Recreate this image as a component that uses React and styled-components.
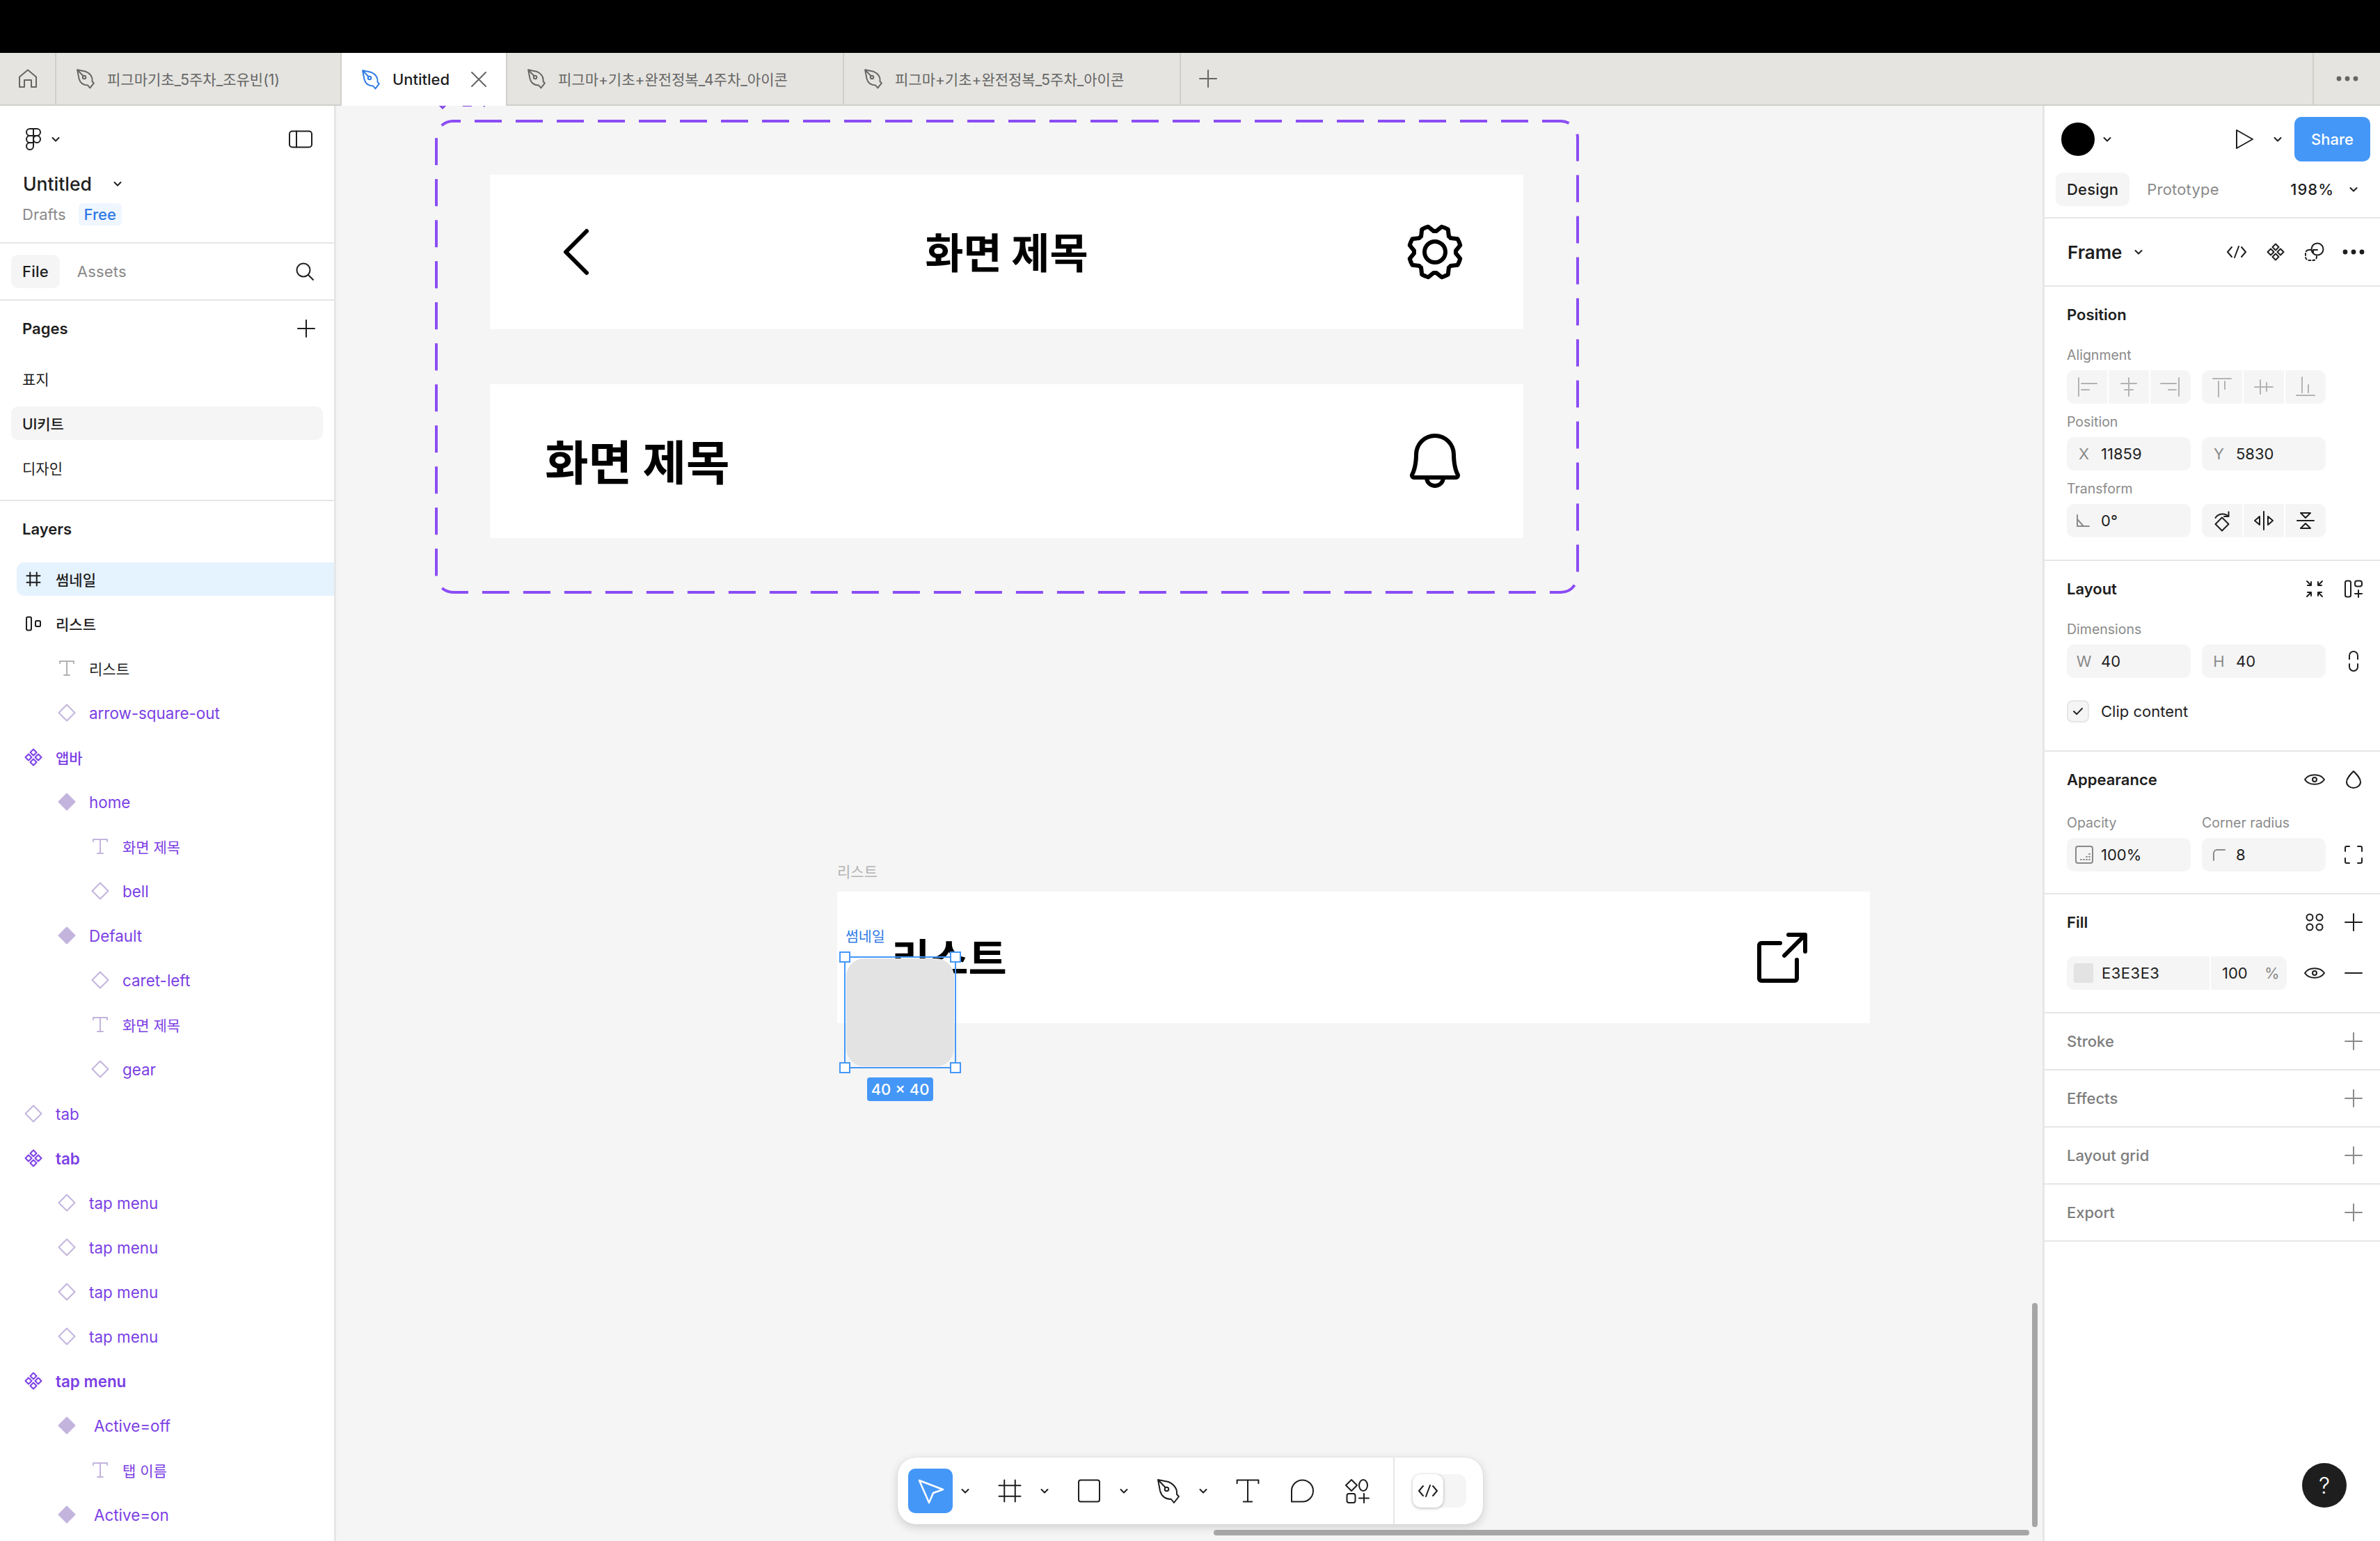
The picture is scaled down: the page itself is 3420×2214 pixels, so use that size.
import React from "react";
import styled, { createGlobalStyle } from "styled-components";
import { PiArrowSquareOut, PiBell, PiCaretLeft, PiGear } from "react-icons/pi";

const BLUE = "#4597f7";
const PURPLE = "#7b3fe4";
const SOFT_PURPLE = "#c3b4de";
const INK = "#1e1e1e";
const MUTED = "#8a8a8a";
const LINE = "#e6e6e6";

const GlobalStyle = createGlobalStyle`
  html, body {
    margin: 0;
    padding: 0;
    background: #000;
    overflow: hidden;
  }
  * {
    box-sizing: border-box;
  }
  body {
    font-family: Inter, "Noto Sans CJK KR", sans-serif;
    color: ${INK};
  }
`;

const diamond = (cx, cy, r) => `M${cx} ${cy - r}L${cx + r} ${cy}L${cx} ${cy + r}L${cx - r} ${cy}Z`;

const ICONS = {
  home: <path d="M12 36V21.5L24 11.5L36 21.5V36H29V26H19V36Z" />,
  pen: (
    <>
      <path d="M9 8L24 11C33 15 37 22 36 29L39 32L32 41L28 36C19 36 14 31 12 24ZM9 8L19.5 19" />
      <circle cx="21.5" cy="21.5" r="2.8" />
    </>
  ),
  close: <path d="M14 14L34 34M34 14L14 34" />,
  plus: <path d="M12 24H36M24 12V36" />,
  minus: <path d="M12 24H36" />,
  chevron: <path d="M19.5 22L24 26.5L28.5 22" />,
  logo: (
    <>
      <path d="M24 9H19A5 5 0 0 0 19 19H24Z" />
      <path d="M24 9H29A5 5 0 0 1 29 19H24Z" />
      <path d="M24 19H19A5 5 0 0 0 19 29H24Z" />
      <circle cx="29" cy="24" r="5" />
      <path d="M19 29H24V34A5 5 0 1 1 19 29Z" />
    </>
  ),
  panel: (
    <>
      <rect x="8" y="12.5" width="32" height="23" rx="4" />
      <path d="M18 12.5V35.5" />
    </>
  ),
  search: (
    <>
      <circle cx="22" cy="22" r="9.5" />
      <path d="M29 29L36 36" />
    </>
  ),
  frame: <path d="M18 12V36M30 12V36M12 18H36M12 30H36" />,
  auto: (
    <>
      <rect x="14" y="14.5" width="7" height="19" rx="2" />
      <rect x="27" y="20" width="7" height="8" rx="1.5" />
    </>
  ),
  text: <path d="M14 17V14H34V17M24 14V34M20 34H28" />,
  diamond: <path d={diamond(24, 24, 11.5)} />,
  component: (
    <path d={[diamond(24, 17, 4.5), diamond(31, 24, 4.5), diamond(24, 31, 4.5), diamond(17, 24, 4.5)].join("")} />
  ),
  play: <path d="M13 11V37L36 24Z" />,
  code: <path d="M17 17L11 24L17 31M31 17L37 24L31 31M27 16L21 32" />,
  mask: (
    <>
      <rect x="11" y="21" width="16" height="15" rx="5" strokeDasharray="3 3" />
      <circle cx="28" cy="20" r="8.5" fill="#fff" />
      <path d="M22 25V21H28" />
    </>
  ),
  dots: (
    <>
      <circle cx="12" cy="24" r="2.4" fill="currentColor" />
      <circle cx="24" cy="24" r="2.4" fill="currentColor" />
      <circle cx="36" cy="24" r="2.4" fill="currentColor" />
    </>
  ),
  alignL: <path d="M12 11V37M16 19H38M16 28H27" />,
  alignC: <path d="M24 11V37M13 19H35M18 28H30" />,
  alignR: <path d="M36 11V37M10 19H32M21 28H32" />,
  alignT: <path d="M11 12H37M19 16V38M28 16V27" />,
  alignM: <path d="M11 24H37M19 14V34M28 18V30" />,
  alignB: <path d="M11 36H37M19 10V32M28 21V32" />,
  angle: <path d="M14 16V32H31M14 22L23 32" />,
  rotate: <path d={`${diamond(24, 29, 9.5)}M14.5 20C19 13 29 13 33 18M33.5 11.5V18H27`} />,
  flipH: <path d="M24 11V37M18 18L11 24L18 30ZM30 18L37 24L30 30Z" />,
  flipV: <path d="M12 24H36M17 13H31L24 20ZM17 35H31L24 28Z" />,
  collapse: (
    <path d="M13 13L19 19M19 14V19H14M35 13L29 19M29 14V19H34M13 35L19 29M19 34V29H14M35 35L29 29M29 34V29H34" />
  ),
  autoAdd: (
    <>
      <rect x="12" y="12.5" width="8" height="23" rx="2.5" />
      <rect x="26" y="12.5" width="10" height="8" rx="3" />
      <path d="M31 26V36M26 31H36" />
    </>
  ),
  link: <path d="M18 21V16A6 6 0 0 1 30 16V21M18 28V32A6 6 0 0 0 30 32V28" />,
  check: <path d="M16 24L21.5 29.5L32 18.5" />,
  eye: (
    <>
      <path d="M10 24C16 15 32 15 38 24C32 33 16 33 10 24Z" />
      <circle cx="24" cy="24" r="3" />
    </>
  ),
  drop: <path d="M24 12C29 17 34 22 34 27.5A10 8.5 0 0 1 14 27.5C14 22 19 17 24 12Z" />,
  opacity: (
    <>
      <rect x="12" y="12" width="24" height="24" rx="3" />
      <path d="M19 31H20M23 31H24M27 31H28M31 31H32M27 27H28M31 27H32M31 23H32" />
    </>
  ),
  corner: <path d="M16 32V22A5 5 0 0 1 21 17H32" />,
  corners: (
    <path d="M12 19V14A2 2 0 0 1 14 12H18M30 12H34A2 2 0 0 1 36 14V19M36 29V34A2 2 0 0 1 34 36H30M18 36H14A2 2 0 0 1 12 34V29" />
  ),
  styles: (
    <>
      <circle cx="17" cy="17" r="4.5" />
      <circle cx="31" cy="17" r="4.5" />
      <circle cx="17" cy="31" r="4.5" />
      <circle cx="31" cy="31" r="4.5" />
    </>
  ),
  cursor: <path d="M8 9L42 22L28 27L22 41Z" />,
  rect: <rect x="9" y="8.5" width="30" height="31" rx="3" />,
  comment: <path d="M9 39.5V24A15.5 15.5 0 1 1 24.5 39.5Z" />,
  actions: (
    <>
      <path d={diamond(15, 16, 8)} />
      <ellipse cx="32" cy="16" rx="6" ry="8" />
      <rect x="8.5" y="28" width="12" height="13" rx="3" />
      <path d="M33 28V41M26 34.5H40" />
    </>
  ),
};

const Svg = styled.svg.attrs((p) => ({
  viewBox: "0 0 48 48",
  width: p.$size || 48,
  height: p.$size || 48,
}))`
  flex-shrink: 0;
  fill: ${(p) => (p.$fill ? p.$color : "none")};
  color: ${(p) => p.$color || INK};
  stroke: ${(p) => p.$color || INK};
  stroke-width: ${(p) => p.$weight || 2};
  stroke-linecap: round;
  stroke-linejoin: round;

  * {
    vector-effect: non-scaling-stroke;
  }
`;

const Glyph = ({ name, size, color, weight, fill }) => (
  <Svg $size={size} $color={color} $weight={weight} $fill={fill}>
    {ICONS[name]}
  </Svg>
);

const Page = styled.div`
  width: 3420px;
  height: 2214px;
  display: flex;
  flex-direction: column;
  background: #000;
  overflow: hidden;
`;

const BlackBar = styled.div`
  height: 76px;
  flex-shrink: 0;
`;

const TabBar = styled.div`
  height: 76px;
  flex-shrink: 0;
  display: flex;
  background: #e5e4e0;
  border-bottom: 2px solid #d0cfcb;
`;

const HomeTab = styled.div`
  width: 81px;
  display: flex;
  align-items: center;
  justify-content: center;
  border-right: 2px solid #cfcec9;
`;

const Tab = styled.div`
  width: ${(p) => p.$width}px;
  height: ${(p) => (p.$active ? "76px" : "auto")};
  display: flex;
  align-items: center;
  padding-left: 23px;
  background: ${(p) => (p.$active ? "#fff" : "transparent")};
  border-right: 2px solid #cfcec9;
  font-size: ${(p) => (p.$active ? "22px" : "21px")};
  font-weight: ${(p) => (p.$active ? 500 : 400)};
  color: ${(p) => (p.$active ? INK : "#666")};
  white-space: nowrap;
`;

const TabLabel = styled.span`
  margin-left: 12px;
  width: ${(p) => (p.$active ? "100px" : "auto")};
`;

const NewTab = styled.div`
  width: 78px;
  display: flex;
  align-items: center;
  justify-content: center;
`;

const TabMenu = styled.div`
  margin-left: auto;
  width: 97px;
  display: flex;
  align-items: center;
  justify-content: center;
  border-left: 2px solid #cfcec9;
`;

const Main = styled.div`
  flex: 1;
  min-height: 0;
  display: flex;
  background: #fff;
`;

/* left panel */

const LeftPanel = styled.aside`
  width: 483px;
  flex-shrink: 0;
  display: flex;
  flex-direction: column;
  background: #fff;
  border-right: 3px solid ${LINE};
  overflow: hidden;
`;

const FileHeader = styled.div`
  height: 198px;
  flex-shrink: 0;
  padding-top: 24px;
  border-bottom: 2px solid ${LINE};
`;

const LogoRow = styled.div`
  height: 48px;
  display: flex;
  align-items: center;
  padding: 0 24px;
  justify-content: space-between;
`;

const LogoMenu = styled.div`
  display: flex;
  align-items: center;

  > svg:last-child {
    margin-left: -16px;
  }
`;

const TitleRow = styled.div`
  height: 48px;
  margin-top: 16px;
  padding-left: 33px;
  display: flex;
  align-items: center;
`;

const FileTitle = styled.span`
  font-size: 26.5px;
  font-weight: 500;
  width: 112px;
`;

const Crumbs = styled.div`
  height: 32px;
  margin-top: 4px;
  padding-left: 32px;
  display: flex;
  align-items: center;
  gap: 18px;
  font-size: 22px;
  color: ${MUTED};
`;

const FreeBadge = styled.span`
  height: 32px;
  padding: 0 8px;
  display: flex;
  align-items: center;
  border-radius: 6px;
  background: #f0f6ff;
  color: #2f7ae5;
  font-weight: 500;
`;

const PanelTabs = styled.div`
  height: 82px;
  flex-shrink: 0;
  padding: 16px 18px 0 16px;
  display: flex;
  align-items: flex-start;
  gap: 9px;
  border-bottom: 2px solid ${LINE};
`;

const PanelTab = styled.div`
  height: 48px;
  padding: 0 16px;
  display: flex;
  align-items: center;
  border-radius: 10px;
  font-size: 22px;
  font-weight: ${(p) => (p.$active ? 500 : 400)};
  letter-spacing: 0.2px;
  color: ${(p) => (p.$active ? INK : MUTED)};
  background: ${(p) => (p.$active ? "#f5f5f5" : "transparent")};
`;

const SearchSlot = styled.div`
  margin-left: auto;
`;

const PagesSection = styled.div`
  height: 288px;
  flex-shrink: 0;
  padding-top: 16px;
  border-bottom: 2px solid ${LINE};
`;

const PanelHead = styled.div`
  height: 48px;
  padding: 0 16px 0 32px;
  display: flex;
  align-items: center;
  justify-content: space-between;
  font-size: 22px;
  font-weight: 600;
`;

const PageList = styled.div`
  margin-top: 24px;
  display: flex;
  flex-direction: column;
  gap: 16px;
`;

const PageRow = styled.div`
  height: 48px;
  margin: 0 16px;
  padding-left: 16px;
  display: flex;
  align-items: center;
  border-radius: 10px;
  font-size: 21px;
  font-weight: ${(p) => (p.$active ? 500 : 400)};
  background: ${(p) => (p.$active ? "#f5f5f5" : "transparent")};
`;

const LayersSection = styled.div`
  flex: 1;
  min-height: 0;
  padding-top: 16px;
`;

const LayerList = styled.div`
  margin-top: 24px;
  display: flex;
  flex-direction: column;
  gap: 16px;
`;

const LayerRow = styled.div`
  height: 48px;
  flex-shrink: 0;
  margin-left: 24px;
  padding-left: ${(p) => p.$level * 48}px;
  display: flex;
  align-items: center;
  border-radius: 10px 0 0 10px;
  background: ${(p) => (p.$selected ? "#e5f3ff" : "transparent")};
`;

const IconSlot = styled.div`
  width: ${(p) => p.$width || 48}px;
  height: 48px;
  flex-shrink: 0;
  display: flex;
  align-items: center;
  justify-content: center;
`;

const LayerName = styled.span`
  margin-left: ${(p) => p.$offset || 8}px;
  font-size: ${(p) => (p.$ko ? "21px" : "22.4px")};
  font-weight: ${(p) => p.$weight || 400};
  color: ${(p) => p.$color};
  white-space: nowrap;
`;

/* canvas */

const Canvas = styled.main`
  flex: 1;
  min-width: 0;
  position: relative;
  background: #f5f5f5;
  overflow: hidden;
`;

const ClippedLabel = styled.div`
  position: absolute;
  left: 141px;
  top: -21px;
  display: flex;
  align-items: center;
  gap: 12px;
  line-height: 24px;
  font-size: 22px;
  color: ${PURPLE};

  > svg {
    transform: translateY(7px);
  }
`;

const ComponentSet = styled.section`
  position: absolute;
  left: 144px;
  top: 22px;
  width: 1640px;
  height: 677px;
  padding: 77px 78px 78px 77px;
  display: flex;
  flex-direction: column;
  gap: 79px;
`;

const DashedOutline = styled.svg`
  position: absolute;
  inset: 0;
  overflow: visible;
  fill: none;
  stroke: #8b4df5;
  stroke-width: 4px;
`;

const AppBar = styled.div`
  flex: 1;
  display: flex;
  align-items: center;
  justify-content: space-between;
  padding: 0 79px;
  background: #fff;
  color: #000;
`;

const BarTitle = styled.span`
  padding-bottom: 4px;
  font-size: ${(p) => p.$size}px;
  font-weight: 700;
  font-family: "Noto Sans CJK KR", sans-serif;
  white-space: nowrap;
  color: #000;
`;

const FrameLabel = styled.div`
  position: absolute;
  left: 720px;
  top: 1084px;
  font-size: 21px;
  color: #b3b3b3;
`;

const ListCard = styled.section`
  position: absolute;
  left: 720px;
  top: 1129px;
  width: 1484px;
  height: 189px;
  padding: 0 78px;
  display: flex;
  align-items: center;
  justify-content: space-between;
  background: #fff;
  color: #000;
`;

const Selection = styled.div`
  position: absolute;
  left: 730px;
  top: 1222px;
  width: 161px;
  height: 161px;
  padding: 1px;
  border: 2px solid ${BLUE};
`;

const Thumbnail = styled.div`
  width: 100%;
  height: 100%;
  border-radius: 26px;
  background: #e3e3e3;
`;

const Handle = styled.div`
  position: absolute;
  width: 16px;
  height: 16px;
  ${(p) => p.$y}: -9px;
  ${(p) => p.$x}: -9px;
  background: #fff;
  border: 2px solid ${BLUE};
`;

const SelectionName = styled.div`
  position: absolute;
  left: 0;
  top: -44px;
  font-size: 20.5px;
  line-height: 28px;
  color: #2f7ae5;
  white-space: nowrap;
`;

const SizeBadge = styled.div`
  position: absolute;
  left: 31px;
  top: 172px;
  width: 95px;
  height: 34px;
  display: flex;
  align-items: center;
  justify-content: center;
  border-radius: 4px;
  background: ${BLUE};
  color: #fff;
  font-size: 22px;
  font-weight: 500;
  white-space: nowrap;
`;

const Toolbar = styled.div`
  position: absolute;
  left: 807px;
  top: 1942px;
  width: 841px;
  height: 96px;
  padding: 0 24px 0 15px;
  display: flex;
  align-items: center;
  background: #fff;
  border-radius: 26px;
  box-shadow: 0 4px 14px rgba(0, 0, 0, 0.16), 0 0 1px rgba(0, 0, 0, 0.2);
`;

const Tool = styled.div`
  width: 64px;
  height: 64px;
  flex-shrink: 0;
  margin-right: ${(p) => p.$after || 0}px;
  display: flex;
  align-items: center;
  justify-content: center;
  border-radius: 10px;
  background: ${(p) => (p.$active ? BLUE : "transparent")};
`;

const ToolChevron = styled.div`
  width: 36px;
  margin-right: 14px;
  display: flex;
  justify-content: center;
`;

const ToolDivider = styled.div`
  width: 2px;
  height: 100%;
  margin: 0 26px 0 19px;
  flex-shrink: 0;
  background: ${LINE};
`;

const CodeToggle = styled.div`
  width: 78px;
  height: 48px;
  background: #f5f5f5;
  border-radius: 12px;
`;

const CodeKnob = styled.div`
  width: 44px;
  height: 48px;
  display: flex;
  align-items: center;
  justify-content: center;
  background: #fff;
  border-radius: 12px;
  box-shadow: 0 1px 4px rgba(0, 0, 0, 0.3);
`;

const ScrollThumb = styled.div`
  position: absolute;
  left: ${(p) => p.$left}px;
  top: ${(p) => p.$top}px;
  width: ${(p) => p.$w}px;
  height: ${(p) => p.$h}px;
  background: #a6a6a6;
  border-radius: 4px;
`;

/* right panel */

const RightPanel = styled.aside`
  width: 485px;
  flex-shrink: 0;
  position: relative;
  background: #fff;
  border-left: 3px solid ${LINE};
  overflow: hidden;
`;

const TopSection = styled.div`
  height: 162px;
  padding: 16px 14px 0 24px;
  border-bottom: 2px solid ${LINE};
`;

const ActionRow = styled.div`
  height: 64px;
  display: flex;
  align-items: center;
`;

const Avatar = styled.div`
  width: 48px;
  height: 48px;
  border-radius: 50%;
  background: #000;
`;

const AvatarChevron = styled.div`
  margin-left: -6px;
  margin-right: auto;
  display: flex;
`;

const ShareButton = styled.div`
  width: 109px;
  height: 64px;
  display: flex;
  align-items: center;
  justify-content: center;
  border-radius: 10px;
  background: ${BLUE};
  color: #fff;
  font-size: 22px;
  font-weight: 500;
`;

const ModeRow = styled.div`
  height: 48px;
  margin-top: 16px;
  margin-left: -8px;
  display: flex;
  align-items: center;
  gap: 9px;
`;

const ZoomValue = styled.span`
  margin-left: auto;
  font-size: 22px;
  font-weight: 500;
  letter-spacing: 1px;
  display: flex;
  align-items: center;

  > svg {
    margin-left: 4px;
  }
`;

const FrameRow = styled.div`
  height: 98px;
  padding: 0 14px 0 33px;
  display: flex;
  align-items: center;
  gap: 8px;
  border-bottom: 2px solid ${LINE};
`;

const FrameName = styled.span`
  font-size: 26px;
  font-weight: 600;
`;

const FrameChevron = styled.div`
  margin-left: -8px;
  margin-right: auto;
  display: flex;
`;

const Section = styled.div`
  height: ${(p) => p.$height}px;
  padding: ${(p) => (p.$collapsed ? "0" : "16px")} 14px 0 32px;
  display: ${(p) => (p.$collapsed ? "flex" : "block")};
  align-items: center;
  border-bottom: 2px solid ${LINE};
`;

const SectionHead = styled.div`
  height: 48px;
  width: 100%;
  display: flex;
  align-items: center;
  gap: 8px;
`;

const SectionTitle = styled.span`
  margin-right: auto;
  font-size: 22px;
  font-weight: ${(p) => (p.$muted ? 500 : 600)};
  color: ${(p) => (p.$muted ? "#7d7d7d" : INK)};
`;

const FieldRow = styled.div`
  display: grid;
  grid-template-columns: 178px 178px 48px;
  column-gap: 16px;
  margin-top: ${(p) => p.$top || 0}px;
`;

const FieldLabel = styled.div`
  height: 48px;
  padding-top: 3px;
  margin-top: ${(p) => p.$top || 0}px;
  display: flex;
  align-items: center;
  font-size: 19.5px;
  color: ${MUTED};
  white-space: nowrap;
`;

const LabelRow = styled.div`
  display: grid;
  grid-template-columns: 178px 178px;
  column-gap: 16px;
`;

const Input = styled.div`
  height: 48px;
  display: flex;
  align-items: center;
  border-radius: 10px;
  background: #f5f5f5;
  font-size: 22px;
  white-space: nowrap;
`;

const InputAffix = styled.span`
  width: 49px;
  flex-shrink: 0;
  display: flex;
  align-items: center;
  justify-content: center;
  color: ${MUTED};
`;

const SegmentGroup = styled.div`
  height: 48px;
  display: grid;
  grid-template-columns: repeat(3, 1fr);
  column-gap: 2px;
  border-radius: 10px;
  overflow: hidden;
`;

const Segment = styled.div`
  display: flex;
  align-items: center;
  justify-content: center;
  background: #f5f5f5;
`;

const CheckRow = styled.div`
  height: 48px;
  margin-top: 24px;
  display: flex;
  align-items: center;
  font-size: 22px;
`;

const CheckBox = styled.div`
  width: 32px;
  height: 32px;
  margin-right: 17px;
  display: flex;
  align-items: center;
  justify-content: center;
  border-radius: 8px;
  background: #f5f5f5;
  border: 2px solid ${LINE};
`;

const FillRow = styled.div`
  display: flex;
  gap: 16px;
  margin-top: 25px;
  align-items: center;
`;

const FillField = styled.div`
  width: 316px;
  height: 48px;
  display: flex;
  align-items: center;
  border-radius: 10px;
  background: #f5f5f5;
  font-size: 22px;
`;

const Swatch = styled.span`
  width: 28px;
  height: 28px;
  margin: 0 12px 0 10px;
  border-radius: 3px;
  background: #e3e3e3;
`;

const FillHex = styled.span`
  width: 157px;
  height: 100%;
  display: flex;
  align-items: center;
  letter-spacing: 0.5px;
  border-right: 2px solid #fff;
`;

const FillOpacity = styled.span`
  margin-left: 16px;
  width: 61px;
`;

const Percent = styled.span`
  color: ${MUTED};
`;

const FillActions = styled.div`
  display: flex;
  gap: 8px;
`;

const HelpButton = styled.div`
  position: absolute;
  right: 48px;
  bottom: 48px;
  width: 64px;
  height: 64px;
  display: flex;
  align-items: center;
  justify-content: center;
  border-radius: 50%;
  background: ${INK};
  color: #fff;
  font-size: 32px;
  font-weight: 300;
`;

const layers = [
  { name: "썸네일", icon: "frame", size: 38, level: 0, ko: true, weight: 500, tone: "ink", selected: true },
  { name: "리스트", icon: "auto", level: 0, ko: true, weight: 500, tone: "ink" },
  { name: "리스트", icon: "text", level: 1, ko: true, tone: "ink", iconColor: "#b3b3b3" },
  { name: "arrow-square-out", icon: "diamond", level: 1 },
  { name: "앱바", icon: "component", level: 0, ko: true, weight: 500, strong: true },
  { name: "home", icon: "diamond", level: 1, fill: true },
  { name: "화면 제목", icon: "text", level: 2, ko: true },
  { name: "bell", icon: "diamond", level: 2 },
  { name: "Default", icon: "diamond", level: 1, fill: true },
  { name: "caret-left", icon: "diamond", level: 2 },
  { name: "화면 제목", icon: "text", level: 2, ko: true },
  { name: "gear", icon: "diamond", level: 2 },
  { name: "tab", icon: "diamond", level: 0 },
  { name: "tab", icon: "component", level: 0, weight: 600, strong: true },
  { name: "tap menu", icon: "diamond", level: 1 },
  { name: "tap menu", icon: "diamond", level: 1 },
  { name: "tap menu", icon: "diamond", level: 1 },
  { name: "tap menu", icon: "diamond", level: 1 },
  { name: "tap menu", icon: "component", level: 0, weight: 600, strong: true },
  { name: "Active=off", icon: "diamond", level: 1, fill: true, offset: 15 },
  { name: "탭 이름", icon: "text", level: 2, ko: true },
  { name: "Active=on", icon: "diamond", level: 1, fill: true, offset: 15 },
];

const Layer = ({ layer }) => {
  const iconColor =
    layer.tone === "ink" && !layer.iconColor
      ? INK
      : layer.iconColor || (layer.strong ? PURPLE : SOFT_PURPLE);
  return (
    <LayerRow $level={layer.level} $selected={layer.selected}>
      <IconSlot>
        <Glyph name={layer.icon} size={layer.size} color={iconColor} fill={layer.fill} />
      </IconSlot>
      <LayerName
        $ko={layer.ko}
        $weight={layer.weight}
        $offset={layer.offset}
        $color={layer.tone === "ink" ? INK : PURPLE}
      >
        {layer.name}
      </LayerName>
    </LayerRow>
  );
};

const Segments = ({ names, color = "#b3b3b3", weight }) => (
  <SegmentGroup>
    {names.map((name) => (
      <Segment key={name}>
        <Glyph name={name} color={color} weight={weight} />
      </Segment>
    ))}
  </SegmentGroup>
);

const CollapsedSection = ({ title }) => (
  <Section $height={82} $collapsed>
    <SectionHead>
      <SectionTitle $muted>{title}</SectionTitle>
      <Glyph name="plus" color="#8a8a8a" />
    </SectionHead>
  </Section>
);

const App = () => (
  <Page>
    <GlobalStyle />
    <BlackBar />
    <TabBar>
      <HomeTab>
        <Glyph name="home" color="#666" />
      </HomeTab>
      <Tab $width={410}>
        <Glyph name="pen" size={38} color="#666" />
        <TabLabel>피그마기초_5주차_조유빈(1)</TabLabel>
      </Tab>
      <Tab $width={238} $active>
        <Glyph name="pen" size={38} color="#2f7ae5" />
        <TabLabel $active>Untitled</TabLabel>
        <Glyph name="close" color="#666" />
      </Tab>
      <Tab $width={484}>
        <Glyph name="pen" size={38} color="#666" />
        <TabLabel>피그마+기초+완전정복_4주차_아이콘</TabLabel>
      </Tab>
      <Tab $width={484}>
        <Glyph name="pen" size={38} color="#666" />
        <TabLabel>피그마+기초+완전정복_5주차_아이콘</TabLabel>
      </Tab>
      <NewTab>
        <Glyph name="plus" color="#666" />
      </NewTab>
      <TabMenu>
        <Glyph name="dots" color="#666" />
      </TabMenu>
    </TabBar>

    <Main>
      <LeftPanel>
        <FileHeader>
          <LogoRow>
            <LogoMenu>
              <Glyph name="logo" />
              <Glyph name="chevron" />
            </LogoMenu>
            <Glyph name="panel" />
          </LogoRow>
          <TitleRow>
            <FileTitle>Untitled</FileTitle>
            <Glyph name="chevron" />
          </TitleRow>
          <Crumbs>
            Drafts
            <FreeBadge>Free</FreeBadge>
          </Crumbs>
        </FileHeader>

        <PanelTabs>
          <PanelTab $active>File</PanelTab>
          <PanelTab>Assets</PanelTab>
          <SearchSlot>
            <Glyph name="search" />
          </SearchSlot>
        </PanelTabs>

        <PagesSection>
          <PanelHead>
            Pages
            <Glyph name="plus" />
          </PanelHead>
          <PageList>
            <PageRow>표지</PageRow>
            <PageRow $active>UI키트</PageRow>
            <PageRow>디자인</PageRow>
          </PageList>
        </PagesSection>

        <LayersSection>
          <PanelHead>Layers</PanelHead>
          <LayerList>
            {layers.map((layer, i) => (
              <Layer key={i} layer={layer} />
            ))}
          </LayerList>
        </LayersSection>
      </LeftPanel>

      <Canvas>
        <ClippedLabel>
          <Glyph name="component" size={24} color={PURPLE} />
          앱바
        </ClippedLabel>

        <ComponentSet>
          <DashedOutline width="1640" height="677" viewBox="0 0 1640 677">
            <rect x="0" y="0" width="1640" height="677" rx="24" strokeDasharray="39 20" strokeDashoffset="28" />
          </DashedOutline>
          <AppBar>
            <PiCaretLeft size={96} />
            <BarTitle $size={60}>화면 제목</BarTitle>
            <PiGear size={96} />
          </AppBar>
          <AppBar>
            <BarTitle $size={68}>화면 제목</BarTitle>
            <PiBell size={96} />
          </AppBar>
        </ComponentSet>

        <FrameLabel>리스트</FrameLabel>
        <ListCard>
          <BarTitle $size={60}>리스트</BarTitle>
          <PiArrowSquareOut size={96} />
        </ListCard>

        <Selection>
          <Thumbnail />
          <SelectionName>썸네일</SelectionName>
          <Handle $y="top" $x="left" />
          <Handle $y="top" $x="right" />
          <Handle $y="bottom" $x="left" />
          <Handle $y="bottom" $x="right" />
          <SizeBadge>40 × 40</SizeBadge>
        </Selection>

        <Toolbar>
          <Tool $active>
            <Glyph name="cursor" color="#fff" weight={2.5} />
          </Tool>
          <ToolChevron>
            <Glyph name="chevron" />
          </ToolChevron>
          <Tool>
            <Glyph name="frame" size={62} />
          </Tool>
          <ToolChevron>
            <Glyph name="chevron" />
          </ToolChevron>
          <Tool>
            <Glyph name="rect" />
          </Tool>
          <ToolChevron>
            <Glyph name="chevron" />
          </ToolChevron>
          <Tool>
            <Glyph name="pen" />
          </Tool>
          <ToolChevron>
            <Glyph name="chevron" />
          </ToolChevron>
          <Tool $after={14}>
            <Glyph name="text" size={74} />
          </Tool>
          <Tool $after={16}>
            <Glyph name="comment" />
          </Tool>
          <Tool>
            <Glyph name="actions" />
          </Tool>
          <ToolDivider />
          <CodeToggle>
            <CodeKnob>
              <Glyph name="code" />
            </CodeKnob>
          </CodeToggle>
        </Toolbar>

        <ScrollThumb $left={1261} $top={2046} $w={1172} $h={8} />
        <ScrollThumb $left={2437} $top={1720} $w={8} $h={322} />
      </Canvas>

      <RightPanel>
        <TopSection>
          <ActionRow>
            <Avatar />
            <AvatarChevron>
              <Glyph name="chevron" />
            </AvatarChevron>
            <Glyph name="play" />
            <Glyph name="chevron" />
            <ShareButton>Share</ShareButton>
          </ActionRow>
          <ModeRow>
            <PanelTab $active>Design</PanelTab>
            <PanelTab>Prototype</PanelTab>
            <ZoomValue>
              198%
              <Glyph name="chevron" />
            </ZoomValue>
          </ModeRow>
        </TopSection>

        <FrameRow>
          <FrameName>Frame</FrameName>
          <FrameChevron>
            <Glyph name="chevron" />
          </FrameChevron>
          <Glyph name="code" />
          <Glyph name="component" />
          <Glyph name="mask" />
          <Glyph name="dots" />
        </FrameRow>

        <Section $height={394}>
          <SectionHead>
            <SectionTitle>Position</SectionTitle>
          </SectionHead>
          <FieldLabel $top={8}>Alignment</FieldLabel>
          <LabelRow>
            <Segments names={["alignL", "alignC", "alignR"]} />
            <Segments names={["alignT", "alignM", "alignB"]} />
          </LabelRow>
          <FieldLabel>Position</FieldLabel>
          <LabelRow>
            <Input>
              <InputAffix>X</InputAffix>11859
            </Input>
            <Input>
              <InputAffix>Y</InputAffix>5830
            </Input>
          </LabelRow>
          <FieldLabel>Transform</FieldLabel>
          <LabelRow>
            <Input>
              <InputAffix>
                <Glyph name="angle" color="#8a8a8a" />
              </InputAffix>
              0°
            </Input>
            <Segments names={["rotate", "flipH", "flipV"]} color={INK} />
          </LabelRow>
        </Section>

        <Section $height={274}>
          <SectionHead>
            <SectionTitle>Layout</SectionTitle>
            <Glyph name="collapse" />
            <Glyph name="autoAdd" />
          </SectionHead>
          <FieldLabel $top={8}>Dimensions</FieldLabel>
          <FieldRow>
            <Input>
              <InputAffix>W</InputAffix>40
            </Input>
            <Input>
              <InputAffix>H</InputAffix>40
            </Input>
            <Glyph name="link" />
          </FieldRow>
          <CheckRow>
            <CheckBox>
              <Glyph name="check" size={36} />
            </CheckBox>
            Clip content
          </CheckRow>
        </Section>

        <Section $height={205}>
          <SectionHead>
            <SectionTitle>Appearance</SectionTitle>
            <Glyph name="eye" />
            <Glyph name="drop" />
          </SectionHead>
          <LabelRow>
            <FieldLabel $top={12}>Opacity</FieldLabel>
            <FieldLabel $top={12}>Corner radius</FieldLabel>
          </LabelRow>
          <FieldRow>
            <Input>
              <InputAffix>
                <Glyph name="opacity" color="#8a8a8a" />
              </InputAffix>
              100%
            </Input>
            <Input>
              <InputAffix>
                <Glyph name="corner" color="#8a8a8a" />
              </InputAffix>
              8
            </Input>
            <Glyph name="corners" />
          </FieldRow>
        </Section>

        <Section $height={171}>
          <SectionHead>
            <SectionTitle>Fill</SectionTitle>
            <Glyph name="styles" />
            <Glyph name="plus" />
          </SectionHead>
          <FillRow>
            <FillField>
              <Swatch />
              <FillHex>E3E3E3</FillHex>
              <FillOpacity>100</FillOpacity>
              <Percent>%</Percent>
            </FillField>
            <FillActions>
              <Glyph name="eye" />
              <Glyph name="minus" />
            </FillActions>
          </FillRow>
        </Section>

        <CollapsedSection title="Stroke" />
        <CollapsedSection title="Effects" />
        <CollapsedSection title="Layout grid" />
        <CollapsedSection title="Export" />

        <HelpButton>?</HelpButton>
      </RightPanel>
    </Main>
  </Page>
);

export default App;
